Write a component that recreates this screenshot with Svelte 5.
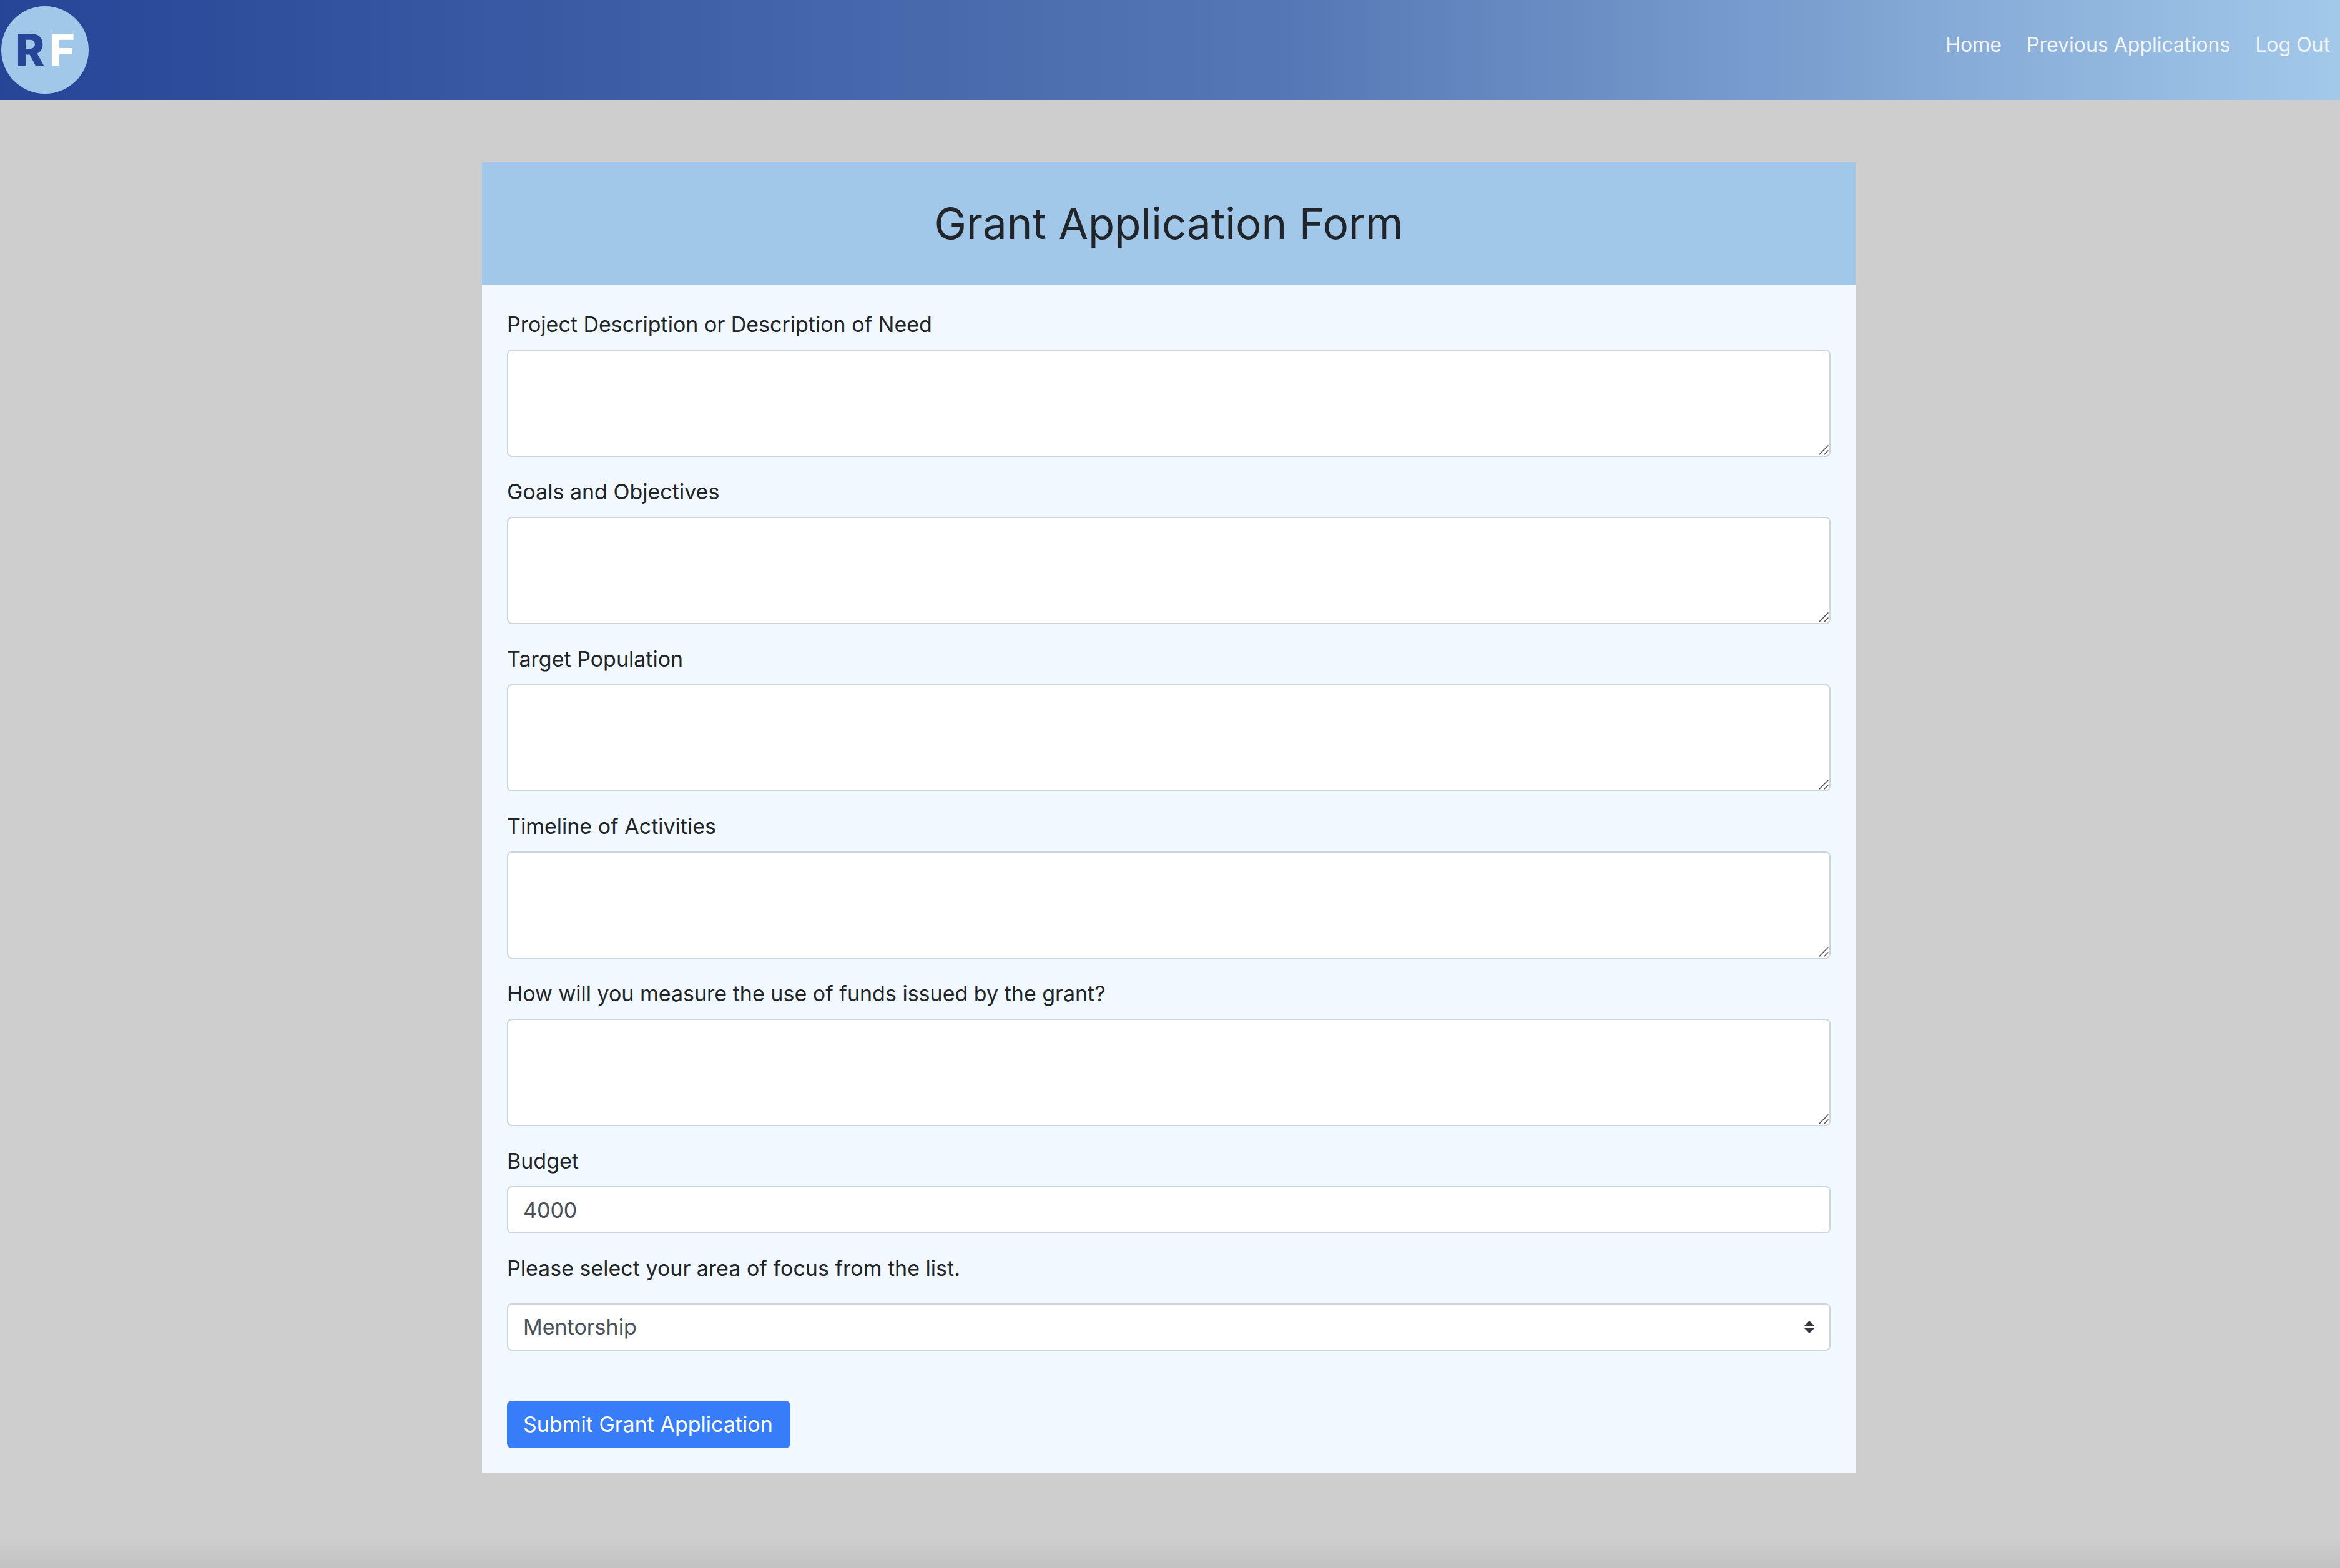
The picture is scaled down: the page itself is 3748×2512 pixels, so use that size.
<script>
  const questions = [
    { id: 'description', label: 'Project Description or Description of Need' },
    { id: 'goals', label: 'Goals and Objectives' },
    { id: 'population', label: 'Target Population' },
    { id: 'timeline', label: 'Timeline of Activities' },
    { id: 'measure', label: 'How will you measure the use of funds issued by the grant?' },
  ];
  const areas = ['Mentorship', 'Education', 'Health', 'Community'];
  let budget = $state(4000);
  let area = $state('Mentorship');
</script>

<div class="page">
  <header>
    <a class="logo" href="#home" aria-label="RF home">
      <svg viewBox="0 0 140 140" width="140" height="140" aria-hidden="true">
        <circle cx="70" cy="70" r="70" fill="#a2c8e9" />
        <text x="23" y="95" fill="#264597">R</text>
        <text x="77" y="95" fill="#ffffff">F</text>
      </svg>
    </a>
    <nav>
      <a href="#home">Home</a>
      <a href="#previous">Previous Applications</a>
      <a href="#logout">Log Out</a>
    </nav>
  </header>

  <main>
    <form class="card" onsubmit={(e) => e.preventDefault()}>
      <h1>Grant Application Form</h1>
      <div class="body">
        {#each questions as q (q.id)}
          <div class="group">
            <label for={q.id}>{q.label}</label>
            <div class="area">
              <textarea id={q.id} rows="3"></textarea>
              <svg class="grip" viewBox="0 0 16 16" width="16" height="16" aria-hidden="true">
                <path d="M.5 15.5 15.5.5M8.5 15.5 15.5 8.5" stroke="#4a4a4a" stroke-width="1.5" fill="none" />
              </svg>
            </div>
          </div>
        {/each}
        <div class="group">
          <label for="budget">Budget</label>
          <input id="budget" type="text" inputmode="numeric" bind:value={budget} />
        </div>
        <div class="group focus">
          <label for="focus">Please select your area of focus from the list.</label>
          <select id="focus" bind:value={area}>
            {#each areas as name}
              <option>{name}</option>
            {/each}
          </select>
        </div>
        <button type="submit">Submit Grant Application</button>
      </div>
    </form>
  </main>
</div>

<style>
  :global(body) {
    margin: 0;
    background: #cecece;
  }
  .page {
    box-sizing: border-box;
    min-height: 100vh;
    padding-bottom: 80px;
    background: linear-gradient(to top, #c2c2c2, #cecece 50px);
    color: #212529;
    font-family: Inter, 'Open Sans', sans-serif;
    font-size: 34px;
    line-height: 48px;
  }
  header {
    display: flex;
    align-items: flex-start;
    justify-content: space-between;
    box-sizing: border-box;
    min-height: 160px;
    padding: 10px 16px 10px 2px;
    background: linear-gradient(to right, #264597, #5478b5 55%, #a2c8ea);
  }
  .logo,
  .logo svg {
    display: block;
  }
  .logo text {
    font-size: 70px;
    font-weight: 800;
  }
  nav {
    display: flex;
    gap: 40px;
    padding-top: 38px;
  }
  nav a {
    color: #f4f4f4;
    font-size: 32px;
    text-decoration: none;
  }
  main {
    padding: 100px 4px 0 0;
  }
  .card {
    width: 100%;
    max-width: 2200px;
    margin: 0 auto;
    background: #f1f8ff;
  }
  h1 {
    margin: 0;
    padding: 60px 40px;
    background: #a2c8e9;
    font-size: 69px;
    font-weight: 400;
    line-height: 76px;
    text-align: center;
  }
  .body {
    padding: 40px;
  }
  .group {
    margin-bottom: 32px;
  }
  .focus {
    margin-bottom: 80px;
  }
  label {
    display: block;
    margin-bottom: 16px;
  }
  .focus label {
    margin-bottom: 32px;
  }
  textarea,
  input,
  select {
    display: block;
    box-sizing: border-box;
    width: 100%;
    margin: 0;
    padding: 12px 24px;
    border: 2px solid #ced4da;
    border-radius: 8px;
    background: #ffffff;
    color: #495057;
    font: inherit;
  }
  .area {
    position: relative;
  }
  textarea {
    height: 172px;
    resize: vertical;
  }
  textarea::-webkit-resizer {
    display: none;
  }
  .grip {
    position: absolute;
    right: 3px;
    bottom: 3px;
    pointer-events: none;
  }
  input,
  select {
    height: 76px;
  }
  select {
    appearance: none;
    background: #ffffff
      url("data:image/svg+xml,%3Csvg xmlns='http://www.w3.org/2000/svg' viewBox='0 0 4 5'%3E%3Cpath fill='%23343a40' d='M2 0L0 2h4zm0 5L0 3h4z'/%3E%3C/svg%3E")
      no-repeat right 24px center / 16px 20px;
  }
  button {
    display: block;
    padding: 12px 26px 12px 24px;
    border: 2px solid #377cf8;
    border-radius: 8px;
    background: #377cf8;
    color: #ffffff;
    font: inherit;
  }
</style>
